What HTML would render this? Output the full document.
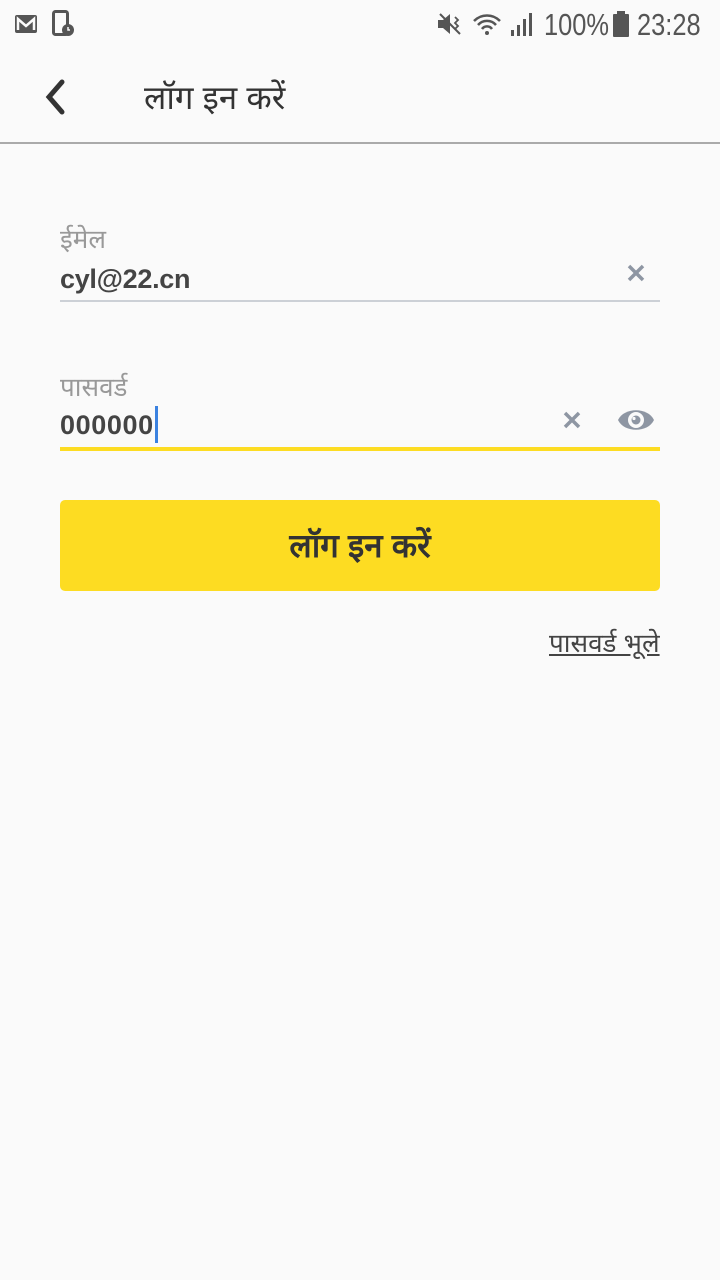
<!DOCTYPE html>
<html><head><meta charset="utf-8"><style>
body{margin:0;width:720px;height:1280px;background:#fafafa;font-family:"Liberation Sans",sans-serif;position:relative;overflow:hidden}
.a{position:absolute}
.st{font-size:31px;color:#555;transform:scaleX(0.82);transform-origin:left top;white-space:nowrap}
</style></head><body>
<!-- status bar -->
<svg class="a" style="left:14px;top:13px" width="26" height="22"><rect x="1" y="2" width="22" height="18" rx="2" fill="#555"/><path d="M4 17V6l8 7 8-7v11" stroke="#fafafa" stroke-width="2.5" fill="none"/></svg>
<svg class="a" style="left:52px;top:10px" width="26" height="28"><rect x="1.5" y="1.5" width="14" height="23" rx="2" stroke="#555" stroke-width="3" fill="none"/><circle cx="16" cy="20" r="6" fill="#555"/><path d="M16 17v3h2" stroke="#fafafa" stroke-width="1.5" fill="none"/></svg>
<svg class="a" style="left:437px;top:11px" width="100" height="26"><path d="M1 9h5l7-6v20l-7-6H1z" fill="#555"/><path d="M3 3l20 20" stroke="#555" stroke-width="2"/><path d="M18 6l3 3-3 3 3 3-3 3" stroke="#555" stroke-width="1.8" fill="none"/><path d="M37 10a18 18 0 0 1 26 0M41 14a12 12 0 0 1 18 0M45 18a6 6 0 0 1 10 0" stroke="#555" stroke-width="2.5" fill="none"/><circle cx="50" cy="22" r="2" fill="#555"/><rect x="74" y="19" width="3" height="6" fill="#555"/><rect x="80" y="14" width="3" height="11" fill="#555"/><rect x="86" y="8" width="3" height="17" fill="#555"/><rect x="92" y="2" width="3" height="23" fill="#555"/></svg>
<div class="a st" style="left:544px;top:7px">100%</div>
<svg class="a" style="left:612px;top:11px" width="18" height="26"><rect x="5" y="0" width="8" height="3" fill="#555"/><rect x="1" y="3" width="16" height="23" rx="1" fill="#555"/></svg>
<div class="a st" style="left:637px;top:7px">23:28</div>
<!-- header -->
<svg class="a" style="left:40px;top:78px" width="30" height="40"><path d="M22 4L9 19l13 15" stroke="#333" stroke-width="5" fill="none" stroke-linecap="round"/></svg>
<div class="a" style="left:144px;top:74px;font-size:33px;color:#333">लॉग इन करें</div>
<div class="a" style="left:0;top:142px;width:720px;height:2px;background:#aaa"></div>
<!-- email -->
<div class="a" style="left:60px;top:220px;font-size:26px;color:#999">ईमेल</div>
<div class="a" style="left:60px;top:264px;font-size:27px;font-weight:bold;color:#444;letter-spacing:-0.3px">cyl@22.cn</div>
<svg class="a" style="left:626px;top:263px" width="20" height="20"><path d="M3 3l14 14M17 3L3 17" stroke="#8e96a3" stroke-width="3.5"/></svg>
<div class="a" style="left:60px;top:300px;width:600px;height:2px;background:#ccd0d6"></div>
<!-- password -->
<div class="a" style="left:60px;top:368px;font-size:26px;color:#999">पासवर्ड</div>
<div class="a" style="left:60px;top:410px;font-size:27px;font-weight:bold;color:#444;letter-spacing:0.6px">000000</div>
<div class="a" style="left:155px;top:406px;width:3px;height:37px;background:#3b82e0"></div>
<svg class="a" style="left:562px;top:410px" width="20" height="20"><path d="M3 3l14 14M17 3L3 17" stroke="#8e96a3" stroke-width="3.5"/></svg>
<svg class="a" style="left:617px;top:404px" width="38" height="32"><path d="M1 16C7 3 31 3 37 16 31 29 7 29 1 16z" fill="#8e96a3"/><circle cx="19" cy="16" r="8" fill="#fafafa"/><circle cx="19" cy="16" r="4.5" fill="#8e96a3"/><circle cx="17" cy="14.5" r="1.6" fill="#fafafa"/></svg>
<div class="a" style="left:60px;top:447px;width:600px;height:4px;background:#fddc22"></div>
<!-- button -->
<div class="a" style="left:60px;top:500px;width:600px;height:91px;background:#fddc22;border-radius:5px;text-align:center;line-height:91px;font-size:33px;font-weight:bold;color:#333">लॉग इन करें</div>
<div class="a" style="left:549px;top:624px;font-size:26px;color:#444;text-decoration:underline">पासवर्ड भूले</div>
</body></html>
